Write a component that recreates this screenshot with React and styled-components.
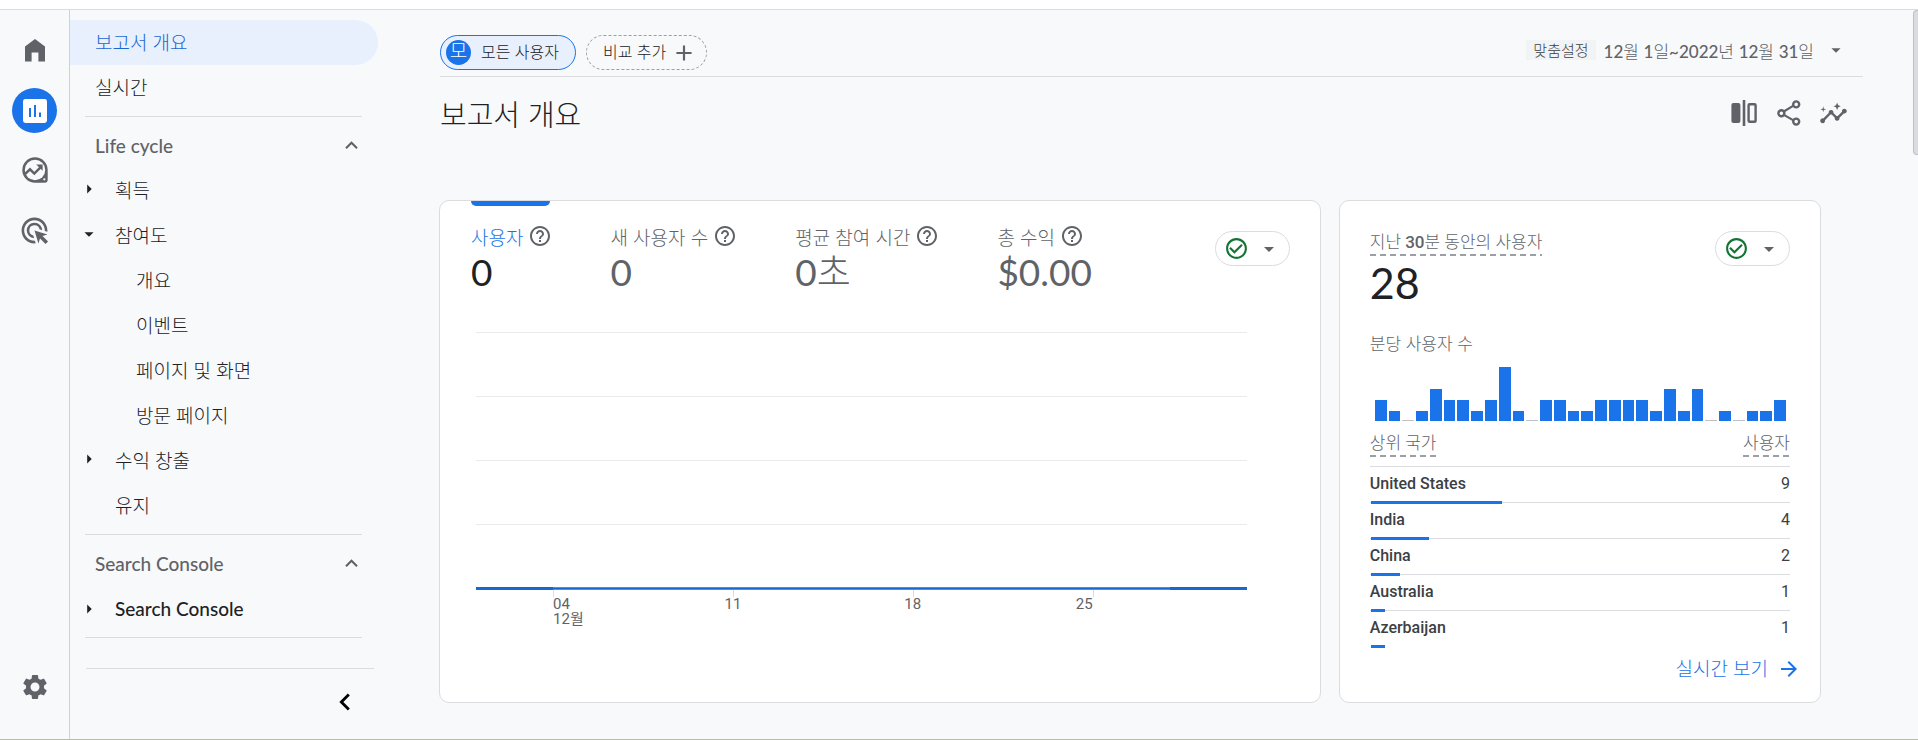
import React, { useState } from "react";
import styled, { createGlobalStyle } from "styled-components";
import {
  MdAdd,
  MdAdsClick,
  MdArrowDropDown,
  MdArrowForward,
  MdArrowRight,
  MdCheckCircleOutline,
  MdChevronLeft,
  MdHelpOutline,
  MdInsights,
  MdKeyboardArrowUp,
  MdSettings,
} from "react-icons/md";

const GlobalStyle = createGlobalStyle`
  * {
    box-sizing: border-box;
  }
  body {
    margin: 0;
    background: #f8f9fb;
    color: #202124;
    font-family: Lato, "Noto Sans CJK KR", sans-serif;
    font-size: 16px;
    font-weight: 300;
  }
  button {
    margin: 0;
    padding: 0;
    border: none;
    background: none;
    color: inherit;
    font: inherit;
    cursor: pointer;
  }
  a {
    color: inherit;
    text-decoration: none;
  }
  h1, h2, p {
    margin: 0;
    font-weight: 300;
  }
  svg {
    display: block;
    flex: none;
  }
`;

const Page = styled.div`
  display: flex;
  flex-direction: column;
  min-height: 100vh;
  border-bottom: 1px solid #b9c0a2;
`;

const TopStrip = styled.div`
  height: 10px;
  background: #fff;
  border-bottom: 1px solid #dadce0;
`;

const Shell = styled.div`
  display: flex;
  flex: 1;
`;

/* icon rail */
const Rail = styled.nav`
  display: flex;
  flex-direction: column;
  align-items: center;
  gap: 15px;
  width: 70px;
  padding: 18px 0 30px;
  border-right: 1px solid #cfd1d4;
  color: #5f6368;
`;

const RailButton = styled.button`
  display: flex;
  align-items: center;
  justify-content: center;
  width: 45px;
  height: 45px;
  border-radius: 50%;
  background: ${(props) => (props.$active ? "#1a73e8" : "none")};

  &:last-child {
    margin-top: auto;
  }
`;

/* report navigation */
const SideNav = styled.nav`
  display: flex;
  flex-direction: column;
  width: 308px;
  padding-top: 10px;
`;

const NavLink = styled.a`
  display: flex;
  align-items: center;
  height: 45px;
  padding: 0 0 3px ${(props) => (props.$level === 2 ? 66 : 25)}px;
  border-radius: 0 23px 23px 0;
  font-size: 19px;
  background: ${(props) => (props.$active ? "#e8f0fe" : "none")};
  color: ${(props) => (props.$active ? "#1967d2" : "#202124")};
`;

const NavGroup = styled.button`
  display: flex;
  align-items: center;
  gap: 15px;
  width: 100%;
  height: 45px;
  padding: 0 0 ${(props) => (props.$latin ? 0 : 3)}px 8px;
  font-size: 19px;
  font-weight: ${(props) => (props.$latin ? 500 : 300)};
`;

const ArrowSlot = styled.span`
  width: 22px;
`;

const NavSection = styled.button`
  display: flex;
  align-items: center;
  justify-content: space-between;
  height: 45px;
  padding: 0 14px 0 25px;
  color: #5f6368;
  font-size: 19px;
  font-weight: 500;
`;

const NavDivider = styled.hr`
  width: auto;
  height: 1px;
  margin: 6px 16px 6px 15px;
  border: none;
  background: #dadce0;
`;

const NavFooter = styled.div`
  display: flex;
  justify-content: flex-end;
  align-items: center;
  height: 71px;
  margin: auto 4px 0 16px;
  padding: 0 12px 4px 0;
  border-top: 1px solid #dadce0;
  color: #000;
`;

/* main area */
const Main = styled.main`
  display: flex;
  flex: 1;
  flex-direction: column;
  min-width: 0;
  padding-left: 61px;
`;

const Toolbar = styled.div`
  display: flex;
  justify-content: space-between;
  margin: 0 50px 0 1px;
  padding: 25px 16px 6px 0;
  border-bottom: 1px solid #dadce0;
`;

const Chips = styled.div`
  display: flex;
  gap: 10px;
`;

const Chip = styled.button`
  display: flex;
  align-items: center;
  gap: ${(props) => (props.$dashed ? 5 : 10)}px;
  height: 35px;
  padding: ${(props) => (props.$dashed ? "0 9px 0 16px" : "0 16px 0 5px")};
  border: 1px ${(props) => (props.$dashed ? "dashed #9aa0a6" : "solid #1a73e8")};
  border-radius: 18px;
  background: ${(props) => (props.$dashed ? "none" : "#e8f0fe")};

  svg {
    color: #5f6368;
  }
`;

const ChipText = styled.span`
  padding-bottom: 3px;
`;

const ChipBadge = styled.span`
  width: 25px;
  height: 25px;
  border-radius: 50%;
  background: #1a73e8;
  color: #fff;
  font-size: 19px;
  line-height: 22px;
  text-align: center;
`;

const DateButton = styled.button`
  display: flex;
  align-items: center;
  height: 30px;
  color: #5f6368;
  font-size: 17px;
`;

const DateTag = styled.span`
  margin-right: 8px;
  padding: 0 7px;
  background: #f1f3f4;
  color: #3c4043;
  font-size: 15px;
  line-height: 20px;
`;

const DateText = styled.span`
  margin-right: 11px;
`;

const Num = styled.span`
  font-weight: 500;
`;

const TitleRow = styled.div`
  display: flex;
  justify-content: space-between;
  align-items: flex-start;
  margin: 0 50px 0 1px;
  padding: 18px 7px 65px 0;
`;

const Title = styled.h1`
  font-size: 29px;
  line-height: 40px;
`;

const Actions = styled.div`
  display: flex;
  color: #5f6368;
`;

const ActionButton = styled.button`
  display: flex;
  align-items: center;
  justify-content: center;
  width: 45px;
  height: 36px;
`;

const Cards = styled.div`
  display: grid;
  grid-template-columns: 64fr 35fr;
  gap: 18px;
  flex: 1;
  margin: 0 92px 36px 0;
`;

const Card = styled.section`
  border: 1px solid #dadce0;
  border-radius: 10px;
  background: #fff;
`;

const MetricCard = styled(Card)`
  padding: 0 30px 0 31px;
`;

const RealtimeCard = styled(Card)`
  padding: 30px 19px 0 30px;
`;

const CardTop = styled.div`
  display: flex;
  justify-content: space-between;
  align-items: flex-start;
`;

const Metrics = styled.div`
  display: flex;
  gap: 60px;
`;

const Metric = styled.button`
  display: flex;
  flex-direction: column;
  align-items: flex-start;
  color: #5f6368;

  &::before {
    content: "";
    width: 100%;
    height: 5px;
    margin-bottom: 18px;
    border-radius: 0 0 5px 5px;
    background: ${(props) => (props.$active ? "#1a73e8" : "none")};
  }
`;

const MetricLabel = styled.span`
  display: flex;
  align-items: center;
  gap: 5px;
  height: 24px;
  color: ${(props) => (props.$active ? "#1a73e8" : "#5f6368")};
  font-size: 19px;

  svg {
    margin-right: -2px;
    color: #5f6368;
  }
`;

const MetricValue = styled.span`
  margin-top: 2px;
  color: ${(props) => (props.$active ? "#202124" : "#5f6368")};
  font-size: 37px;
  font-weight: 400;
  line-height: 44px;
`;

const Unit = styled.span`
  font-weight: 300;
`;

const StatusButton = styled.button`
  display: flex;
  align-items: center;
  justify-content: space-between;
  width: 75px;
  height: 35px;
  margin-top: ${(props) => (props.$offset ? 30 : 0)}px;
  padding: 0 8px;
  border: 1px solid #dadce0;
  border-radius: 18px;
  color: #5f6368;
`;

const Chart = styled.div`
  margin: 38px 43px 0 5px;
`;

const GridLines = styled.div`
  display: grid;
  grid-template-rows: repeat(3, 64px) 63px;

  div {
    border-top: 1px solid #e8eaed;
  }
`;

const DayGrid = styled.div`
  display: grid;
  grid-template-columns: repeat(30, 1fr);
`;

const LineEnd = styled.div`
  grid-column: span 3;
  height: 3px;
  background: #1967d2;
`;

const LineMiddle = styled.div`
  grid-column: span 24;
  height: 3px;
  border: solid #4a8fec;
  border-width: 1px 0;
  background: #1967d2;
`;

const Tick = styled.div`
  grid-row: 1;
  grid-column: ${(props) => props.$day} / span 1;
  height: 7px;
  border-left: 1px solid #dadce0;
`;

const DayLabel = styled.div`
  grid-row: 2;
  grid-column: ${(props) => props.$span};
  color: #5f6368;
  font-family: Roboto, "Noto Sans CJK KR", sans-serif;
  font-size: 15px;
  font-weight: 400;
  line-height: 15px;
  text-align: ${(props) => props.$align};
  white-space: nowrap;
`;

const RealtimeBody = styled.div`
  padding-right: 11px;
`;

const Dashed = styled.span`
  display: inline-block;
  padding-bottom: 2px;
  background: repeating-linear-gradient(90deg, #9aa0a6 0 6px, transparent 6px 10px)
    bottom / 100% 2px no-repeat;
  color: #5f6368;
  font-family: Roboto, "Noto Sans CJK KR", sans-serif;
  font-size: 17px;
  font-weight: 300;
  line-height: 23px;
`;

const LiveCount = styled.p`
  margin-top: 5px;
  font-size: 43px;
  font-weight: 400;
  line-height: 44px;
`;

const SubTitle = styled.h2`
  margin-top: 28px;
  color: #5f6368;
  font-size: 17px;
  line-height: 22px;
`;

const Bars = styled.div`
  display: grid;
  grid-template-columns: repeat(30, 1fr);
  align-items: end;
  gap: 2px;
  height: 54px;
  margin: 12px 4px 0 5px;
`;

const Bar = styled.div`
  background: ${(props) => (props.$empty ? "#bdc1c6" : "#1a73e8")};
`;

const Table = styled.table`
  width: 100%;
  border-spacing: 0;
  color: #3c4043;
  font-family: Roboto, "Noto Sans CJK KR", sans-serif;
  font-size: 16px;

  th, td {
    padding: 0;
    text-align: left;
  }

  th:last-child, td:last-child {
    text-align: right;
  }

  thead th {
    padding: 11px 0 9px;
    border-bottom: 1px solid #dadce0;
    line-height: 0;
  }
`;

const CountryRow = styled.tr`
  position: relative;
  height: 36px;
  line-height: 18px;

  th, td {
    padding-bottom: 1px;
    border-bottom: 1px solid #dadce0;
  }

  th {
    font-weight: 500;
  }

  td {
    font-weight: 400;
  }

  &:last-child th, &:last-child td {
    border-color: transparent;
  }
`;

const Share = styled.div`
  position: absolute;
  left: 1px;
  bottom: -1px;
  height: 3px;
  background: #1a73e8;
`;

const RealtimeLink = styled.a`
  display: flex;
  justify-content: flex-end;
  align-items: center;
  gap: 9px;
  margin-top: 8px;
  color: #1a73e8;
  font-size: 19px;
  line-height: 28px;
`;

const ScrollTrack = styled.div`
  width: 5px;
`;

const ScrollThumb = styled.div`
  height: 145px;
  border: 1px solid #bdc1c6;
  border-right: none;
  border-radius: 4px 0 0 4px;
  background: #dadce0;
`;

const HomeIcon = () => (
  <svg width="20" height="23" viewBox="0 0 20 23" fill="currentColor">
    <path d="M10 0L20 7.4V22.6H13.4V13.6H6.6V22.6H0V7.4z" />
  </svg>
);

const ReportsIcon = () => (
  <svg width="24" height="24" viewBox="0 0 24 24">
    <rect width="24" height="24" rx="2.4" fill="#fff" />
    <path d="M7 9v9M12 6v12M17 13.4V18" stroke="#1a73e8" strokeWidth="2" />
  </svg>
);

const ExploreIcon = () => (
  <svg width="26" height="27" viewBox="0 0 26 27" fill="none">
    <path
      d="M13 1.3a11.7 11.7 0 1 0 0 23.4h9.7a2 2 0 0 0 2-2V13A11.7 11.7 0 0 0 13 1.3z"
      fill="currentColor"
      stroke="currentColor"
      strokeWidth="2"
    />
    <circle cx="13" cy="13" r="10.2" fill="#f8f9fb" />
    <circle cx="22.3" cy="22.3" r="1.1" fill="#f8f9fb" />
    <path d="M3 17.2l5-4.9 4.3 4.3 7.2-7.2" stroke="currentColor" strokeWidth="2.5" />
    <path d="M14.2 7.6h6.4v6.2z" fill="currentColor" />
  </svg>
);

const CompareIcon = () => (
  <svg width="26" height="26" viewBox="0 0 26 26" fill="none">
    <rect x="0.4" y="3" width="9" height="20" rx="2" fill="currentColor" />
    <path d="M13 0v26" stroke="currentColor" strokeWidth="2.6" />
    <rect x="17.6" y="4.2" width="7" height="17.6" rx="1" stroke="currentColor" strokeWidth="2.4" />
  </svg>
);

const ShareIcon = () => (
  <svg width="24" height="26" viewBox="0 0 24 26" fill="none" stroke="currentColor">
    <path d="M6 12L16.5 5.6M6 14.4l10.5 6" strokeWidth="2.2" />
    <circle cx="4.4" cy="13.2" r="3" strokeWidth="2.4" />
    <circle cx="19.2" cy="4.4" r="3" strokeWidth="2.4" />
    <circle cx="19.2" cy="21.6" r="3" strokeWidth="2.4" />
  </svg>
);

const metrics = [
  { label: "사용자", value: "0" },
  { label: "새 사용자 수", value: "0" },
  { label: "평균 참여 시간", value: "0", unit: "초" },
  { label: "총 수익", value: "$0.00" },
];

const usersPerMinute = [
  2, 1, 0, 1, 3, 2, 2, 1, 2, 5, 1, 0, 2, 2, 1, 1, 2, 2, 2, 2, 1, 3, 1, 3, 0, 1, 0, 1, 1, 2,
];

const countries = [
  { name: "United States", users: 9 },
  { name: "India", users: 4 },
  { name: "China", users: 2 },
  { name: "Australia", users: 1 },
  { name: "Azerbaijan", users: 1 },
];

const engagementPages = ["개요", "이벤트", "페이지 및 화면", "방문 페이지"];

const barHeight = (users) => (users === 0 ? 1 : users * 11 - 1);

const Group = ({ label, open, noArrow, latin, onClick }) => (
  <NavGroup $latin={latin} aria-expanded={open} onClick={onClick}>
    <ArrowSlot>
      {!noArrow && (open ? <MdArrowDropDown size={22} /> : <MdArrowRight size={22} />)}
    </ArrowSlot>
    {label}
  </NavGroup>
);

const Status = ({ offset }) => (
  <StatusButton $offset={offset} aria-label="데이터 품질">
    <MdCheckCircleOutline size={25} color="#137333" />
    <MdArrowDropDown size={24} />
  </StatusButton>
);

const App = () => {
  const [activeMetric, setActiveMetric] = useState(0);
  const [engagementOpen, setEngagementOpen] = useState(true);

  return (
    <Page>
      <GlobalStyle />
      <TopStrip />
      <Shell>
        <Rail>
          <RailButton aria-label="홈">
            <HomeIcon />
          </RailButton>
          <RailButton $active aria-label="보고서">
            <ReportsIcon />
          </RailButton>
          <RailButton aria-label="탐색">
            <ExploreIcon />
          </RailButton>
          <RailButton aria-label="광고">
            <MdAdsClick size={31} />
          </RailButton>
          <RailButton aria-label="관리">
            <MdSettings size={30} />
          </RailButton>
        </Rail>

        <SideNav>
          <NavLink href="#overview" $active>
            보고서 개요
          </NavLink>
          <NavLink href="#realtime">실시간</NavLink>
          <NavDivider />
          <NavSection>
            Life cycle
            <MdKeyboardArrowUp size={25} />
          </NavSection>
          <Group label="획득" open={false} />
          <Group
            label="참여도"
            open={engagementOpen}
            onClick={() => setEngagementOpen(!engagementOpen)}
          />
          {engagementOpen &&
            engagementPages.map((page) => (
              <NavLink key={page} href={`#${page}`} $level={2}>
                {page}
              </NavLink>
            ))}
          <Group label="수익 창출" open={false} />
          <Group label="유지" noArrow />
          <NavDivider />
          <NavSection>
            Search Console
            <MdKeyboardArrowUp size={25} />
          </NavSection>
          <Group label="Search Console" open={false} latin />
          <NavDivider />
          <NavFooter>
            <button aria-label="접기">
              <MdChevronLeft size={34} />
            </button>
          </NavFooter>
        </SideNav>

        <Main>
          <Toolbar>
            <Chips>
              <Chip>
                <ChipBadge>모</ChipBadge>
                <ChipText>모든 사용자</ChipText>
              </Chip>
              <Chip $dashed>
                <ChipText>비교 추가</ChipText>
                <MdAdd size={26} />
              </Chip>
            </Chips>
            <DateButton aria-haspopup="true">
              <DateTag>맞춤설정</DateTag>
              <DateText>
                <Num>12</Num>월 <Num>1</Num>일<Num>~2022</Num>년 <Num>12</Num>월{" "}
                <Num>31</Num>일
              </DateText>
              <MdArrowDropDown size={22} />
            </DateButton>
          </Toolbar>

          <TitleRow>
            <Title>보고서 개요</Title>
            <Actions>
              <ActionButton aria-label="비교 수정">
                <CompareIcon />
              </ActionButton>
              <ActionButton aria-label="공유">
                <ShareIcon />
              </ActionButton>
              <ActionButton aria-label="통계">
                <MdInsights size={29} />
              </ActionButton>
            </Actions>
          </TitleRow>

          <Cards>
            <MetricCard>
              <CardTop>
                <Metrics>
                  {metrics.map((metric, i) => (
                    <Metric
                      key={metric.label}
                      $active={i === activeMetric}
                      onClick={() => setActiveMetric(i)}
                    >
                      <MetricLabel $active={i === activeMetric}>
                        {metric.label}
                        <MdHelpOutline size={24} />
                      </MetricLabel>
                      <MetricValue $active={i === activeMetric}>
                        {metric.value}
                        {metric.unit && <Unit>{metric.unit}</Unit>}
                      </MetricValue>
                    </Metric>
                  ))}
                </Metrics>
                <Status offset />
              </CardTop>
              <Chart>
                <GridLines>
                  <div />
                  <div />
                  <div />
                  <div />
                </GridLines>
                <DayGrid>
                  <LineEnd />
                  <LineMiddle />
                  <LineEnd />
                </DayGrid>
                <DayGrid>
                  <Tick $day={4} />
                  <Tick $day={11} />
                  <Tick $day={18} />
                  <Tick $day={25} />
                  <DayLabel $span="4 / span 3" $align="left">
                    04
                    <br />
                    12월
                  </DayLabel>
                  <DayLabel $span="10 / span 2" $align="center">
                    11
                  </DayLabel>
                  <DayLabel $span="17 / span 2" $align="center">
                    18
                  </DayLabel>
                  <DayLabel $span="23 / span 2" $align="right">
                    25
                  </DayLabel>
                </DayGrid>
              </Chart>
            </MetricCard>

            <RealtimeCard>
              <RealtimeBody>
                <CardTop>
                  <div>
                    <Dashed as="h2">
                      지난 <Num>30</Num>분 동안의 사용자
                    </Dashed>
                    <LiveCount>28</LiveCount>
                  </div>
                  <Status />
                </CardTop>
                <SubTitle>분당 사용자 수</SubTitle>
                <Bars>
                  {usersPerMinute.map((users, i) => (
                    <Bar key={i} $empty={users === 0} style={{ height: barHeight(users) }} />
                  ))}
                </Bars>
                <Table>
                  <thead>
                    <tr>
                      <th>
                        <Dashed>상위 국가</Dashed>
                      </th>
                      <th>
                        <Dashed>사용자</Dashed>
                      </th>
                    </tr>
                  </thead>
                  <tbody>
                    {countries.map(({ name, users }) => (
                      <CountryRow key={name}>
                        <th scope="row">
                          {name}
                          <Share style={{ width: `${users * 3.48}%` }} />
                        </th>
                        <td>{users}</td>
                      </CountryRow>
                    ))}
                  </tbody>
                </Table>
              </RealtimeBody>
              <RealtimeLink href="#realtime">
                실시간 보기
                <MdArrowForward size={24} />
              </RealtimeLink>
            </RealtimeCard>
          </Cards>
        </Main>
        <ScrollTrack>
          <ScrollThumb />
        </ScrollTrack>
      </Shell>
    </Page>
  );
};

export default App;
